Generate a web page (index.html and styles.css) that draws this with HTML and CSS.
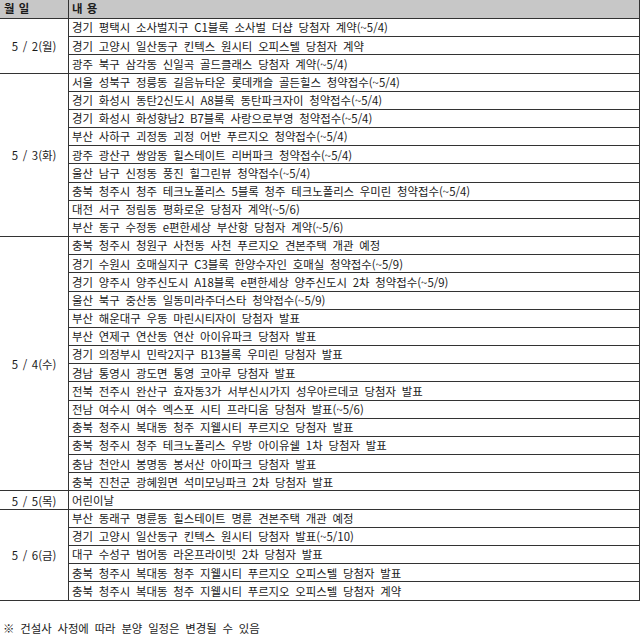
FILE: index.html
```html
<!DOCTYPE html>
<html lang="ko">
<head>
<meta charset="utf-8">
<link rel="stylesheet" href="styles.css">
</head>
<body>
<div class="schedule">
  <div class="head">
    <div class="date-col head-cell">월 일</div>
    <div class="head-cell content-head">내 용</div>
  </div>

  <div class="group">
    <div class="date-col date">5 / 2(월)</div>
    <div class="rows">
      <div class="row">경기 평택시 소사벌지구 C1블록 소사벌 더샵 당첨자 계약(~5/4)</div>
      <div class="row">경기 고양시 일산동구 킨텍스 원시티 오피스텔 당첨자 계약</div>
      <div class="row">광주 북구 삼각동 신일곡 골드클래스 당첨자 계약(~5/4)</div>
    </div>
  </div>

  <div class="group">
    <div class="date-col date">5 / 3(화)</div>
    <div class="rows">
      <div class="row">서울 성북구 정릉동 길음뉴타운 롯데캐슬 골든힐스 청약접수(~5/4)</div>
      <div class="row">경기 화성시 동탄2신도시 A8블록 동탄파크자이 청약접수(~5/4)</div>
      <div class="row">경기 화성시 화성향남2 B7블록 사랑으로부영 청약접수(~5/4)</div>
      <div class="row">부산 사하구 괴정동 괴정 어반 푸르지오 청약접수(~5/4)</div>
      <div class="row">광주 광산구 쌍암동 힐스테이트 리버파크 청약접수(~5/4)</div>
      <div class="row">울산 남구 신정동 풍진 힐그린뷰 청약접수(~5/4)</div>
      <div class="row">충북 청주시 청주 테크노폴리스 5블록 청주 테크노폴리스 우미린 청약접수(~5/4)</div>
      <div class="row">대전 서구 정림동 평화로운 당첨자 계약(~5/6)</div>
      <div class="row">부산 동구 수정동 e편한세상 부산항 당첨자 계약(~5/6)</div>
    </div>
  </div>

  <div class="group">
    <div class="date-col date">5 / 4(수)</div>
    <div class="rows">
      <div class="row">충북 청주시 청원구 사천동 사천 푸르지오 견본주택 개관 예정</div>
      <div class="row">경기 수원시 호매실지구 C3블록 한양수자인 호매실 청약접수(~5/9)</div>
      <div class="row">경기 양주시 양주신도시 A18블록 e편한세상 양주신도시 2차 청약접수(~5/9)</div>
      <div class="row">울산 북구 중산동 일동미라주더스타 청약접수(~5/9)</div>
      <div class="row">부산 해운대구 우동 마린시티자이 당첨자 발표</div>
      <div class="row">부산 연제구 연산동 연산 아이유파크 당첨자 발표</div>
      <div class="row">경기 의정부시 민락2지구 B13블록 우미린 당첨자 발표</div>
      <div class="row">경남 통영시 광도면 통영 코아루 당첨자 발표</div>
      <div class="row">전북 전주시 완산구 효자동3가 서부신시가지 성우아르데코 당첨자 발표</div>
      <div class="row">전남 여수시 여수 엑스포 시티 프라디움 당첨자 발표(~5/6)</div>
      <div class="row">충북 청주시 복대동 청주 지웰시티 푸르지오 당첨자 발표</div>
      <div class="row">충북 청주시 청주 테크노폴리스 우방 아이유쉘 1차 당첨자 발표</div>
      <div class="row">충남 천안시 봉명동 봉서산 아이파크 당첨자 발표</div>
      <div class="row">충북 진천군 광혜원면 석미모닝파크 2차 당첨자 발표</div>
    </div>
  </div>

  <div class="group">
    <div class="date-col date">5 / 5(목)</div>
    <div class="rows">
      <div class="row">어린이날</div>
    </div>
  </div>

  <div class="group">
    <div class="date-col date">5 / 6(금)</div>
    <div class="rows">
      <div class="row">부산 동래구 명륜동 힐스테이트 명륜 견본주택 개관 예정</div>
      <div class="row">경기 고양시 일산동구 킨텍스 원시티 당첨자 발표(~5/10)</div>
      <div class="row">대구 수성구 범어동 라온프라이빗 2차 당첨자 발표</div>
      <div class="row">충북 청주시 복대동 청주 지웰시티 푸르지오 오피스텔 당첨자 발표</div>
      <div class="row">충북 청주시 복대동 청주 지웰시티 푸르지오 오피스텔 당첨자 계약</div>
    </div>
  </div>
</div>

<p class="note">※ 건설사 사정에 따라 분양 일정은 변경될 수 있음</p>
</body>
</html>
```

FILE: styles.css
```css
* { box-sizing: border-box; }

html, body {
  margin: 0;
  padding: 0;
  background: #ffffff;
}

body {
  width: 640px;
  height: 637px;
  overflow: hidden;
  font-family: "Noto Sans CJK KR", "Noto Sans", sans-serif;
  font-size: 11.4px;
  word-spacing: 2.6px;
  color: #1a1a1a;
}

.schedule {
  width: 640px;
  border-right: 1px solid #333333;
  display: flex;
  flex-direction: column;
}

.head {
  display: flex;
  height: 19px;
  background: #c7c7c7;
  border-bottom: 1px solid #333333;
}

.head-cell {
  display: flex;
  align-items: center;
  font-weight: bold;
  line-height: 1;
  word-spacing: 1px;
}

.date-col {
  width: 69px;
  flex: 0 0 69px;
  border-right: 1px solid #333333;
}

.head .date-col {
  padding-left: 4px;
}

.content-head {
  padding-left: 3px;
  flex: 1;
}

.group {
  display: flex;
}

.date {
  display: flex;
  align-items: center;
  justify-content: center;
  border-bottom: 1px solid #333333;
  padding-top: 1px;
  word-spacing: 1.5px;
}

.rows {
  flex: 1;
  display: flex;
  flex-direction: column;
}

.row {
  height: 18.18px;
  border-bottom: 1px solid #333333;
  padding-left: 3px;
  display: flex;
  align-items: center;
  padding-top: 1px;
  white-space: nowrap;
  line-height: 1;
}

.note {
  margin: 20px 0 0 3px;
  line-height: 14px;
}
```
